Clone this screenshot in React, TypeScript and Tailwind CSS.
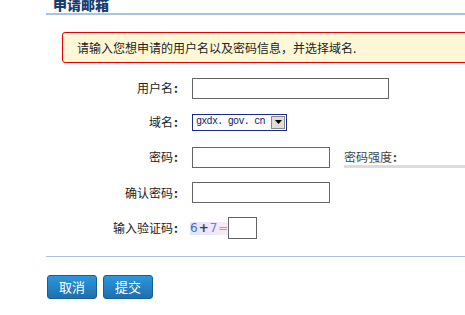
import React from 'react'

const cjk = 'font-["Noto_Sans_CJK_SC",sans-serif]'

function Row({ label, height, children }: { label: string; height: string; children: React.ReactNode }) {
  return (
    <div className={`flex items-center ${height}`}>
      <div className="w-[132px] text-right text-[12px] leading-[14px] text-[#222]">
        {label}<span className="font-bold pl-[1px]">:</span>
      </div>
      {children}
    </div>
  )
}

export default function App() {
  return (
    <div className={`w-[465px] h-[315px] overflow-hidden bg-white pl-[46px] ${cjk}`}>
      <div className="w-[440px]">
        {/* Title, cut at the top of the window */}
        <div className="h-[13px] flex items-end">
          <h1 className="pl-[7px] text-[14px] leading-[14px] font-black text-[#173d6f] mb-[2px]">申请邮箱</h1>
        </div>
        <div className="h-[2px] bg-[#a6c3e1]" />

        {/* Notice */}
        <div className="ml-[16px] mt-[17px] w-[420px] h-[31px] flex items-center pl-[14px] rounded-[3px] border border-[#e60000] bg-[#fff8d6] text-[12px] text-[#222]">
          请输入您想申请的用户名以及密码信息，并选择域名.
        </div>

        {/* Form */}
        <div className="mt-[8px]">
          <Row label="用户名" height="h-[34px]">
            <div className="ml-[14px] w-[197px] h-[21px] border border-[#666] bg-white" />
          </Row>
          <Row label="域名" height="h-[34px]">
            <div className="ml-[14px] flex items-center h-[17px] w-[95px] border border-[#1c2a8c] bg-white pl-[3px] pr-px overflow-hidden">
              <span className="flex-1 whitespace-nowrap overflow-hidden font-['Liberation_Mono',monospace] text-[10px] leading-[12px] tracking-[-0.7px] text-[#101a6e]">gxdx. gov. cn</span>
              <span className="flex items-center justify-center shrink-0 w-[14px] h-[13px] bg-[#e0ddd6] border border-[#888]">
                <svg width="7" height="4" viewBox="0 0 7 4"><path d="M0 0h7L3.5 4z" fill="#000" /></svg>
              </span>
            </div>
          </Row>
          <Row label="密码" height="h-[36px]">
            <div className="ml-[14px] w-[138px] h-[21px] border border-[#666] bg-white" />
            <div className="ml-[14px] mt-[4px] flex flex-col w-[130px]">
              <span className="text-[12px] leading-[14px] text-[#444]">密码强度<span className="font-bold pl-[1px]">:</span></span>
              <div className="mt-px h-[3px] bg-[#dcdcdc]" />
            </div>
          </Row>
          <Row label="确认密码" height="h-[35px]">
            <div className="ml-[14px] w-[138px] h-[21px] border border-[#666] bg-white" />
          </Row>
          <Row label="输入验证码" height="h-[36px]">
            <span className="ml-[12px] flex items-center h-[13px] bg-gradient-to-r from-[#dfe7fb] via-[#ece6fb] to-[#fbeaf2] font-['DejaVu_Sans',sans-serif] text-[12px] leading-[13px]">
              <span className="text-[#4a68c4]">6</span>
              <span className="text-[#3a3a3a] font-bold px-px">+</span>
              <span className="text-[#6d80d0]">7</span>
              <span className="text-[#c48ad9] pl-px">=</span>
            </span>
            <div className="w-[29px] h-[22px] border border-[#666] bg-white" />
          </Row>
        </div>

        <div className="mt-[10px] h-px bg-[#a6c3e1]" />

        {/* Buttons */}
        <div className="mt-[18px] flex gap-[6px] pl-px">
          <button className="w-[50px] h-[24px] rounded-[3px] border border-[#1b5d93] bg-gradient-to-b from-[#2c97dc] to-[#1e6fae] text-white text-[13px] leading-[22px]">取消</button>
          <button className="w-[50px] h-[24px] rounded-[3px] border border-[#1b5d93] bg-gradient-to-b from-[#2c97dc] to-[#1e6fae] text-white text-[13px] leading-[22px]">提交</button>
        </div>
      </div>
    </div>
  )
}
